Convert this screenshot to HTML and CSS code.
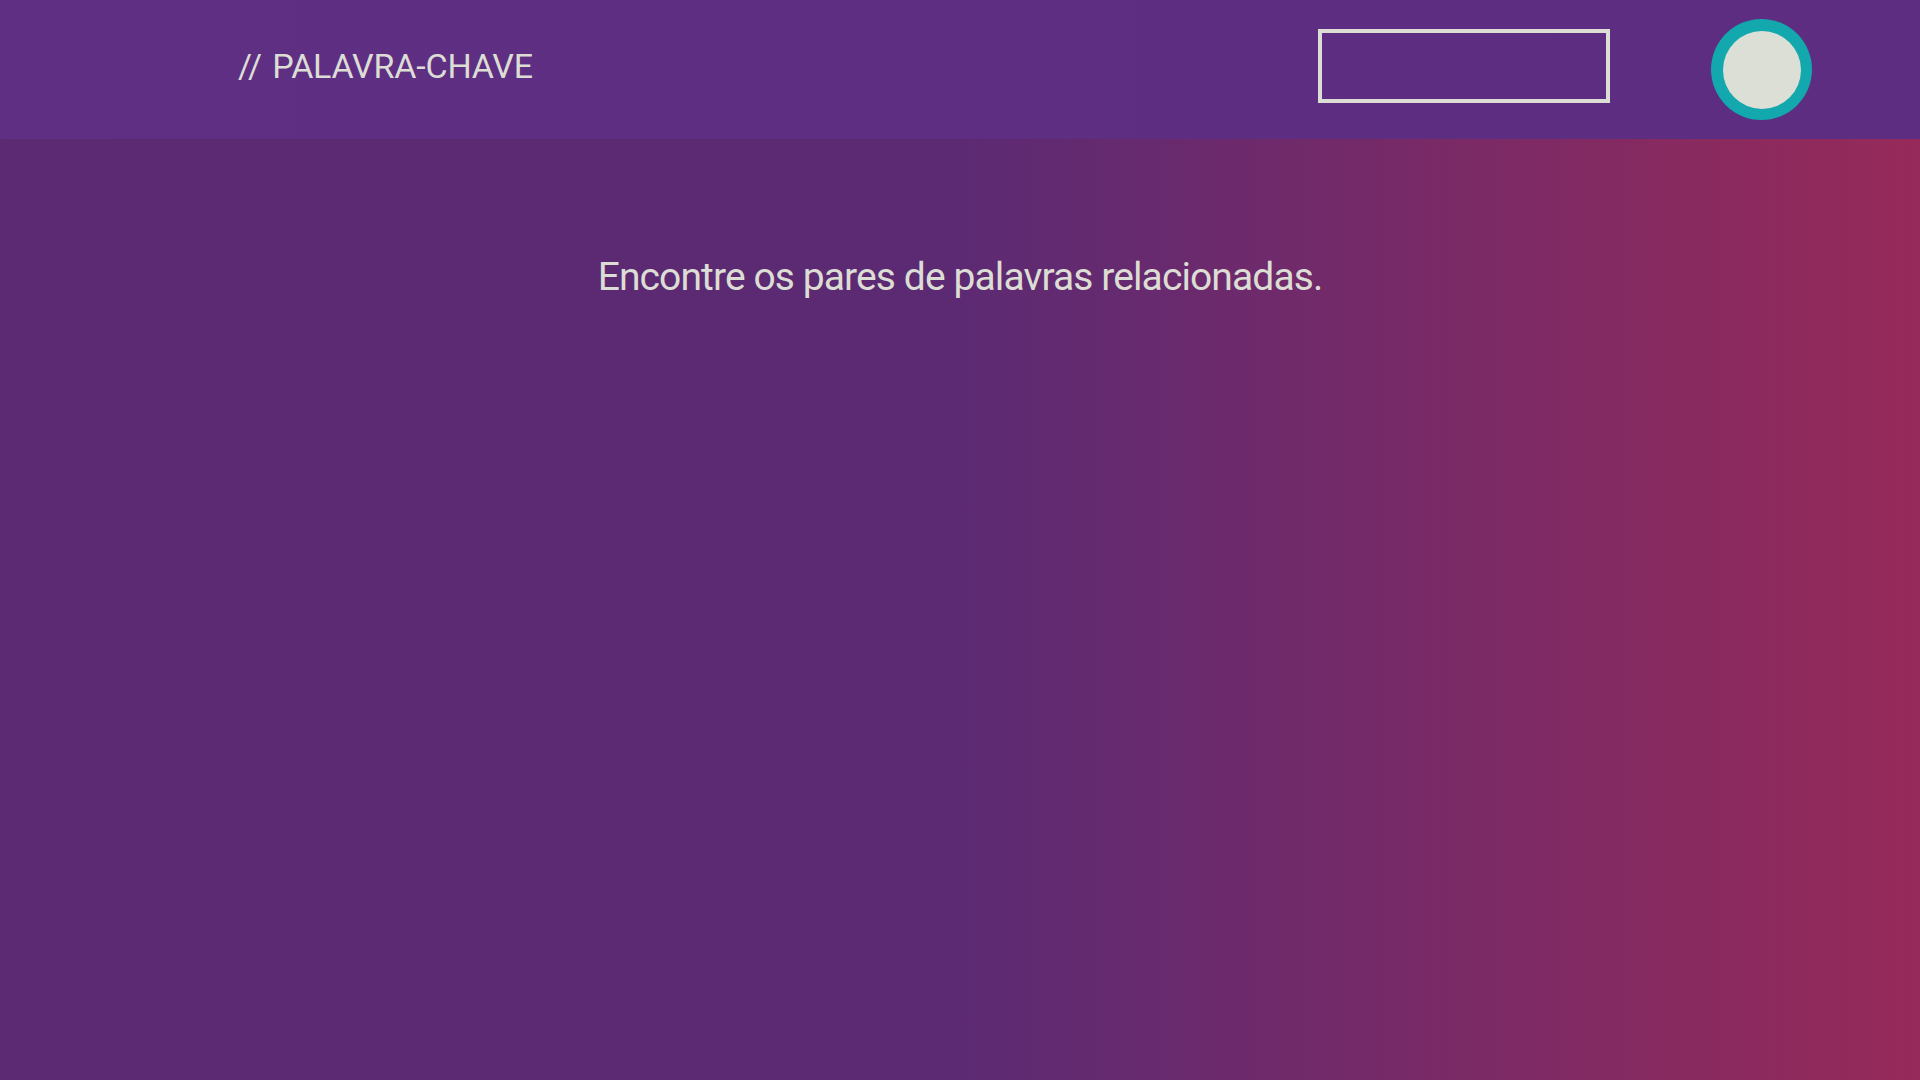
FILE: index.html
```html
<!DOCTYPE html>
<html lang="pt">
<head>
<meta charset="utf-8">
<title>Palavra-chave</title>
<link rel="stylesheet" href="styles.css">
</head>
<body>
<header class="topbar">
  <h1 class="title">// PALAVRA-CHAVE</h1>
  <div class="actions">
    <button class="outline-btn" type="button"></button>
    <div class="avatar"><div class="avatar-inner"></div></div>
  </div>
</header>
<main class="stage">
  <p class="instructions">Encontre os pares de palavras relacionadas.</p>
</main>
</body>
</html>
```
FILE: styles.css
```css
* { box-sizing: border-box; }
html, body { margin: 0; padding: 0; height: 100%; }
body {
  width: 1920px;
  height: 1080px;
  overflow: hidden;
  font-family: "Roboto", "Noto Sans", sans-serif;
  color: #dcddd4;
  display: flex;
  flex-direction: column;
  background: linear-gradient(to right, #5c2a73 0%, #5c2a73 50%, #962a5a 100%);
}
.topbar {
  height: 139px;
  flex: none;
  background: linear-gradient(to right, #5f2f83, #5c2d80);
  display: flex;
  align-items: center;
  justify-content: space-between;
  padding: 0 108px 0 238px;
}
.title {
  margin: -8px 0 0 0;
  font-weight: 400;
  font-size: 34px;
  letter-spacing: -0.2px;
  word-spacing: 2px;
  color: #dcddd4;
}
.actions {
  display: flex;
  align-items: center;
  gap: 101px;
}
.outline-btn {
  width: 292px;
  height: 74px;
  border: 4px solid #dcddd4;
  background: transparent;
  padding: 0;
  margin-top: -7px;
}
.avatar {
  width: 101px;
  height: 101px;
  border-radius: 50%;
  background: #12a8ad;
  display: flex;
  align-items: center;
  justify-content: center;
}
.avatar-inner {
  width: 78px;
  height: 78px;
  border-radius: 50%;
  background: #dcdfd6;
}
.stage {
  flex: 1;
  display: flex;
  justify-content: center;
  padding-top: 112px;
}
.instructions {
  margin: 0;
  font-size: 39px;
  line-height: 52px;
  letter-spacing: -0.9px;
  color: #dcddd4;
}
```
